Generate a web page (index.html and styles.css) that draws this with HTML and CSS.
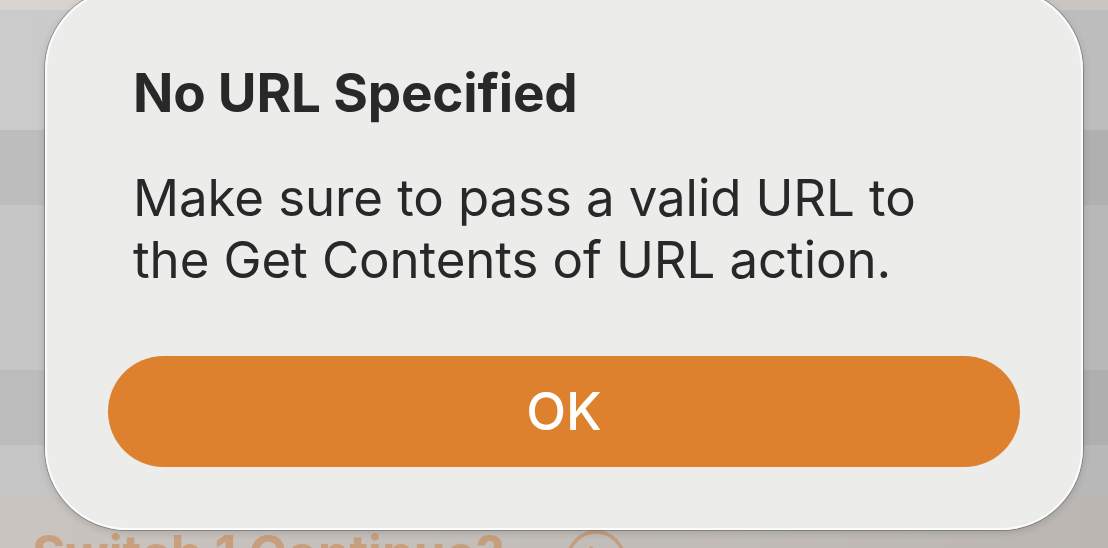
FILE: index.html
```html
<!DOCTYPE html>
<html lang="en">
<head>
<meta charset="utf-8">
<title>No URL Specified</title>
<link rel="stylesheet" href="styles.css">
</head>
<body>
<div class="desktop">
  <div class="backdrop-row">
    <span class="backdrop-text">Switch 1 Continue?</span>
    <span class="backdrop-icon">
      <svg viewBox="0 0 60 60" width="60" height="60" aria-hidden="true">
        <circle cx="30" cy="30" r="28" fill="none" stroke="#c98a55" stroke-width="3.5"/>
        <path d="M25 18 L37 30 L25 42" fill="none" stroke="#c98a55" stroke-width="3.5" stroke-linecap="round" stroke-linejoin="round"/>
      </svg>
    </span>
  </div>
  <div class="alert" role="alertdialog" aria-labelledby="alert-title">
    <h1 class="alert-title" id="alert-title">No URL Specified</h1>
    <p class="alert-message">Make sure to pass a valid URL to<br>the Get Contents of URL action.</p>
    <button class="alert-button" type="button">OK</button>
  </div>
</div>
</body>
</html>
```

FILE: styles.css
```css
html, body {
  margin: 0;
  padding: 0;
  width: 1108px;
  height: 548px;
  overflow: hidden;
}

body {
  font-family: "Inter", "Liberation Sans", sans-serif;
  background:
    linear-gradient(to right, rgba(255,255,255,0) 0, rgba(0,0,0,0.07) 100%),
    linear-gradient(to bottom,
      #d8d4d0 0, #d8d4d0 10px,
      #cbcbcb 10px, #cbcbcb 130px,
      #bdbdbd 130px, #bdbdbd 205px,
      #c6c6c6 205px, #c6c6c6 370px,
      #bcbcbc 370px, #bcbcbc 445px,
      #c6c6c6 445px, #c6c6c6 495px,
      #c9c4bf 495px, #c9c4bf 548px);
}

.desktop {
  position: relative;
  width: 1108px;
  height: 548px;
}

/* blurred content behind the alert, only its top edge shows */
.backdrop-row {
  position: absolute;
  left: 32px;
  top: 524px;
  display: flex;
  align-items: flex-start;
  gap: 62px;
  opacity: 0.6;
}

.backdrop-text {
  font-size: 51px;
  font-weight: 700;
  color: #c98a55;
  line-height: 60px;
  white-space: nowrap;
}

.backdrop-icon {
  display: block;
  width: 60px;
  height: 60px;
  margin-top: 6px;
}

.backdrop-icon svg {
  display: block;
}

.alert {
  position: absolute;
  left: 45px;
  top: -12px;
  width: 1038px;
  height: 542px;
  box-sizing: border-box;
  padding: 74px 63px 63px;
  display: flex;
  flex-direction: column;
  background: #ececeb;
  border-radius: 82px;
  box-shadow:
    0 0 0 1px rgba(70, 70, 70, 0.4),
    inset 0 0 0 2px rgba(255, 255, 255, 0.85),
    0 2px 8px rgba(0, 0, 0, 0.16);
}

.alert-title {
  margin: 0 25px;
  font-size: 53px;
  line-height: 62px;
  font-weight: 700;
  color: #282828;
  letter-spacing: -0.2px;
}

.alert-message {
  margin: 43px 25px 0;
  font-size: 51px;
  line-height: 62px;
  font-weight: 400;
  color: #282828;
  letter-spacing: -0.1px;
}

.alert-button {
  margin-top: 65px;
  height: 111px;
  border: none;
  border-radius: 56px;
  background: #dd812e;
  color: #ffffff;
  font-family: "Inter", "Liberation Sans", sans-serif;
  font-size: 52px;
  font-weight: 500;
  padding: 0;
  cursor: default;
}
```
